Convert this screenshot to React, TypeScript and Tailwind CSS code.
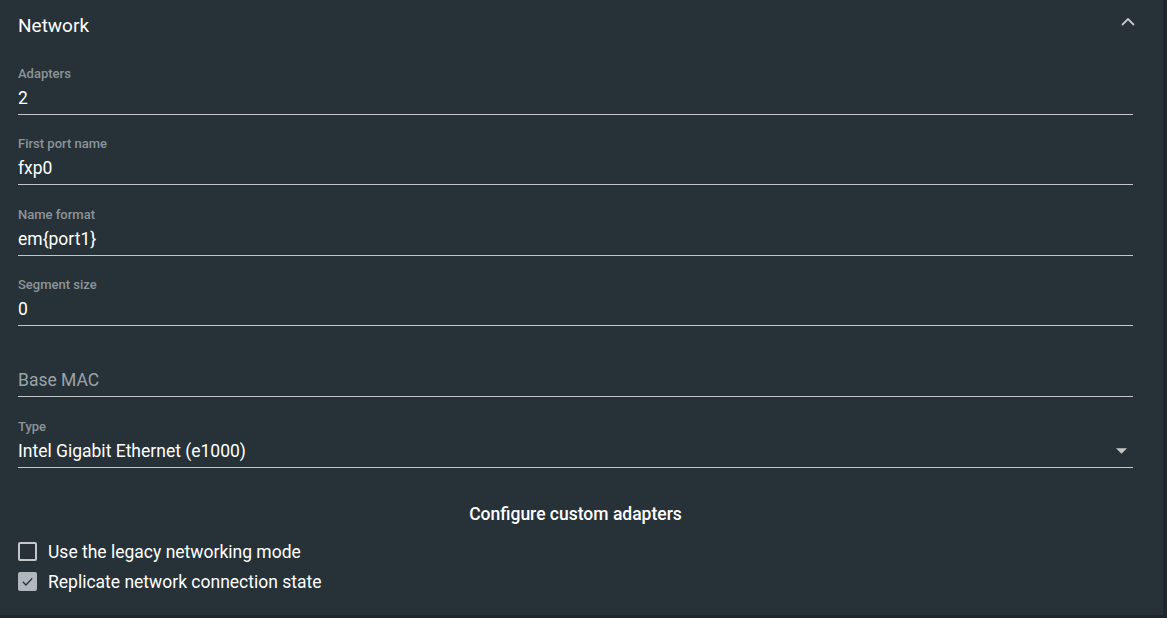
import React from 'react'

type Field = {
  label?: string
  value?: string
  placeholder?: string
  select?: boolean
}

const fields: Field[] = [
  { label: 'Adapters', value: '2' },
  { label: 'First port name', value: 'fxp0' },
  { label: 'Name format', value: 'em{port1}' },
  { label: 'Segment size', value: '0' },
  { placeholder: 'Base MAC' },
  { label: 'Type', value: 'Intel Gigabit Ethernet (e1000)', select: true },
]

function FormField({ field }: { field: Field }) {
  return (
    <div className="h-[70.6px] flex flex-col justify-end">
      {field.label && (
        <div className="text-[13px] leading-[16px] text-[#8d9498] font-medium">{field.label}</div>
      )}
      <div className="mt-[4px] flex items-center border-b border-[#c4c7c9] pb-[4px]">
        <div className={`flex-1 text-[17.5px] leading-[24px] ${field.value ? 'text-white' : 'text-[#9ba3a7]'}`}>
          {field.value ?? field.placeholder}
        </div>
        {field.select && (
          <svg className="w-[11px] h-[6px] mr-[6px]" viewBox="0 0 10 5">
            <path d="M0 0h10L5 5z" fill="#c4c7c9" />
          </svg>
        )}
      </div>
    </div>
  )
}

function Checkbox({ checked, label }: { checked: boolean; label: string }) {
  return (
    <label className="flex items-center gap-[11px] h-[30px]">
      {checked ? (
        <span className="w-[19px] h-[19px] rounded-[2px] bg-[#b0b8bc] flex items-center justify-center">
          <svg className="w-[15px] h-[15px]" viewBox="0 0 24 24" fill="none">
            <path d="M4.5 12.5l5 5L19.5 7" stroke="#263238" strokeWidth="2.2" />
          </svg>
        </span>
      ) : (
        <span className="w-[19px] h-[19px] rounded-[2px] border-2 border-[#c4c7c9]" />
      )}
      <span className="text-[17.5px] leading-[24px] text-white">{label}</span>
    </label>
  )
}

export default function App() {
  return (
    <div className="h-[618px] w-full bg-[#1f272c] font-['Roboto',sans-serif]">
      <div className="h-[615px] w-[1163px] bg-[#263238] pl-[18px] pr-[30px]">
        <div className="h-[44px] flex items-center justify-between pt-[7px]">
          <h2 className="text-[19px] leading-[24px] text-white">Network</h2>
          <svg className="w-[14px] h-[8px] mr-[-2px] mt-[-7px]" viewBox="0 0 14 8" fill="none">
            <path d="M1 7l6-6 6 6" stroke="#c4c7c9" strokeWidth="1.8" />
          </svg>
        </div>

        {fields.map((f, i) => (
          <FormField key={i} field={f} />
        ))}

        <div className="mt-[34px] text-center text-[17.5px] leading-[24px] font-medium text-white">
          Configure custom adapters
        </div>

        <div className="mt-[11px]">
          <Checkbox checked={false} label="Use the legacy networking mode" />
          <Checkbox checked={true} label="Replicate network connection state" />
        </div>
      </div>
    </div>
  )
}
